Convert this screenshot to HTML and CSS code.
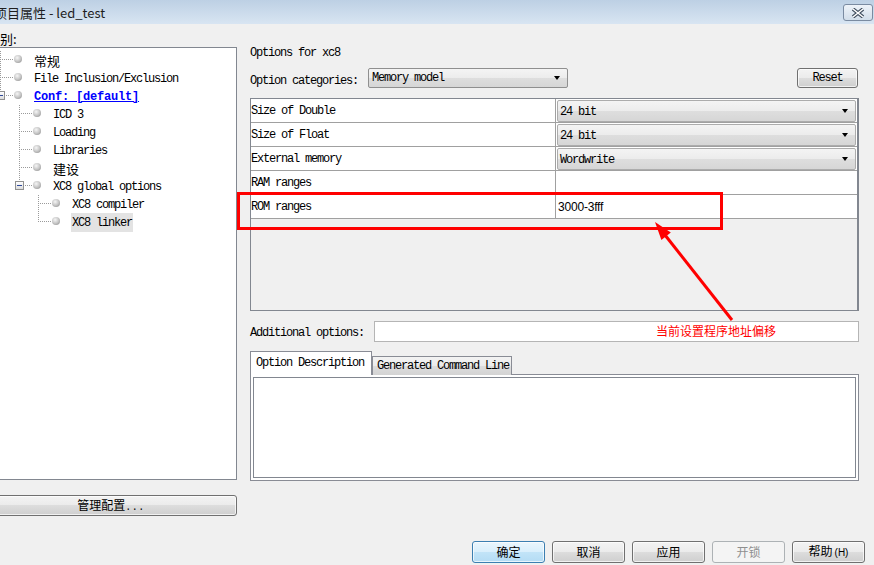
FILE: index.html
```html
<!DOCTYPE html>
<html lang="zh-CN">
<head>
    <meta charset="UTF-8">
    <title>项目属性 - led_test</title>
    <link rel="stylesheet" href="styles.css">
</head>
<body>
<div class="window">

    <div class="titlebar">
        <span class="title">项目属性 - led_test</span>
        <button class="close">
            <svg width="14" height="10" viewBox="0 0 14 10">
                <path d="M2 1 L12 9 M12 1 L2 9" stroke="#3f4d5e" stroke-width="3.6"/>
                <path d="M2 1 L12 9 M12 1 L2 9" stroke="#ffffff" stroke-width="1.6"/>
            </svg>
        </button>
    </div>

    <div class="content">
        <!-- category tree -->
        <div class="side">
            <div class="side-label">类别:</div>
            <div class="tree">
                <div class="node"><span class="tee"></span><span class="ball"></span><span class="name cjk">常规</span></div>
                <div class="node"><span class="tee"></span><span class="ball"></span><span class="name">File Inclusion/Exclusion</span></div>
                <div class="node"><span class="elbow"><span class="toggle"></span></span><span class="ball"></span><span class="name link">Conf: [default]</span></div>
                <div class="node"><span class="indent"></span><span class="tee"></span><span class="ball"></span><span class="name">ICD 3</span></div>
                <div class="node"><span class="indent"></span><span class="tee"></span><span class="ball"></span><span class="name">Loading</span></div>
                <div class="node"><span class="indent"></span><span class="tee"></span><span class="ball"></span><span class="name">Libraries</span></div>
                <div class="node"><span class="indent"></span><span class="tee"></span><span class="ball"></span><span class="name cjk">建设</span></div>
                <div class="node"><span class="indent"></span><span class="elbow"><span class="toggle"></span></span><span class="ball"></span><span class="name">XC8 global options</span></div>
                <div class="node"><span class="indent"></span><span class="indent"></span><span class="tee"></span><span class="ball"></span><span class="name">XC8 compiler</span></div>
                <div class="node"><span class="indent"></span><span class="indent"></span><span class="elbow"></span><span class="ball"></span><span class="name selected">XC8 linker</span></div>
            </div>
            <button class="btn wide">管理配置<span class="dots">...</span></button>
        </div>

        <!-- option pane -->
        <div class="pane">
            <div class="pane-title">Options for xc8</div>

            <div class="cat-row">
                <span class="cat-label">Option categories:</span>
                <div class="combo small">
                    <span>Memory model</span>
                    <span class="caret"></span>
                </div>
                <button class="btn reset">Reset</button>
            </div>

            <div class="grid">
                <div class="grid-row">
                    <div class="key">Size of Double</div>
                    <div class="val"><div class="combo"><span>24 bit</span><span class="caret"></span></div></div>
                </div>
                <div class="grid-row">
                    <div class="key">Size of Float</div>
                    <div class="val"><div class="combo"><span>24 bit</span><span class="caret"></span></div></div>
                </div>
                <div class="grid-row">
                    <div class="key">External memory</div>
                    <div class="val"><div class="combo"><span>Wordwrite</span><span class="caret"></span></div></div>
                </div>
                <div class="grid-row">
                    <div class="key">RAM ranges</div>
                    <div class="val"><div class="field"></div></div>
                </div>
                <div class="grid-row">
                    <div class="key">ROM ranges</div>
                    <div class="val"><div class="field">3000-3fff</div></div>
                </div>
            </div>

            <div class="extra-row">
                <span class="extra-label">Additional options:</span>
                <div class="extra-input"></div>
            </div>

            <div class="tabs">
                <div class="tab active">Option Description</div>
                <div class="tab">Generated Command Line</div>
            </div>
            <div class="tab-panel">
                <div class="tab-inner"></div>
            </div>
        </div>
    </div>

    <div class="footer">
        <button class="btn dlg default">确定</button>
        <button class="btn dlg">取消</button>
        <button class="btn dlg">应用</button>
        <button class="btn dlg" disabled>开锁</button>
        <button class="btn dlg">帮助<span class="key-hint">(H)</span></button>
    </div>

    <!-- red annotation drawn over the dialog -->
    <div class="mark-box"></div>
    <svg class="mark-arrow" width="100" height="115" viewBox="0 0 100 115">
        <line x1="25" y1="25" x2="92" y2="110" stroke="#ff0000" stroke-width="3"/>
        <polygon points="15,12 21.4,29.9 30.8,22.5" fill="#ff0000"/>
    </svg>
    <div class="mark-text">当前设置程序地址偏移</div>
</div>
</body>
</html>
```

FILE: styles.css
```css
* {
    margin: 0;
    padding: 0;
    box-sizing: border-box;
}

body {
    background: #f0f0f0;
    font-family: "Liberation Mono", monospace;
    font-size: 12px;
    letter-spacing: -1.2px;
    color: #000;
}

.window {
    position: relative;
    width: 874px;
    height: 565px;
    overflow: hidden;
}

/* Title bar */
.titlebar {
    height: 24px;
    display: flex;
    justify-content: space-between;
    align-items: flex-start;
    background: linear-gradient(to bottom, #bdd0e4, #d8e5f2);
}

.title {
    margin-left: -6px;
    padding-top: 4px;
    line-height: 17px;
    font-family: "Noto Sans CJK SC", sans-serif;
    font-size: 13px;
    letter-spacing: 0;
    color: #1e1e1e;
    white-space: nowrap;
}

.close {
    width: 30px;
    height: 17px;
    margin: 4px 1px 0 0;
    border: 1px solid #7a8ba1;
    border-radius: 3px;
    background: linear-gradient(to bottom, #eef3f9, #d2deea);
    display: flex;
    align-items: center;
    justify-content: center;
}

.content {
    display: flex;
    height: 517px;
}

/* Left side: tree */
.side {
    flex-shrink: 0;
    width: 252px;
    margin-left: -15px;
    display: flex;
    flex-direction: column;
}

.side-label {
    height: 23px;
    padding: 7px 0 0 2px;
    line-height: 16px;
    font-family: "Noto Sans CJK SC", sans-serif;
    font-size: 13px;
    letter-spacing: 0;
    white-space: nowrap;
}

.tree {
    height: 433px;
    background: #fff;
    border: 1px solid #828790;
    padding: 3px 0 0 13px;
}

.node {
    display: flex;
    align-items: center;
    height: 18px;
}

.indent {
    width: 19px;
    height: 18px;
    flex-shrink: 0;
}

.tee,
.elbow {
    width: 15px;
    height: 18px;
    flex-shrink: 0;
    display: flex;
    align-items: center;
    background:
        repeating-linear-gradient(to bottom, #9a9a9a 0 1px, transparent 1px 2px) 1px 0 / 1px 18px no-repeat,
        repeating-linear-gradient(to right, #9a9a9a 0 1px, transparent 1px 2px) 3px 8px / 11px 1px no-repeat;
}

.elbow {
    background:
        repeating-linear-gradient(to bottom, #9a9a9a 0 1px, transparent 1px 2px) 1px 0 / 1px 9px no-repeat,
        repeating-linear-gradient(to right, #9a9a9a 0 1px, transparent 1px 2px) 3px 8px / 11px 1px no-repeat;
}

.toggle {
    width: 9px;
    height: 9px;
    margin: -1px 0 0 -3px;
    border: 1px solid #919191;
    background:
        linear-gradient(#2f4a9a, #2f4a9a) center / 5px 1px no-repeat,
        linear-gradient(to bottom, #ffffff, #dcdcdc);
}

.ball {
    width: 8px;
    height: 8px;
    margin-top: -3px;
    flex-shrink: 0;
    border-radius: 50%;
    background: radial-gradient(circle at 40% 35%, #f6f6f6 0, #c6c6c6 50%, #858585 100%);
}

.name {
    margin: 2px 0 0 11px;
    padding: 0 1px;
    line-height: 17px;
    white-space: nowrap;
}

.name.cjk {
    margin-top: 0;
    font-family: "Noto Sans CJK SC", sans-serif;
    font-size: 13px;
    letter-spacing: 0;
}

.name.link {
    color: #0000ff;
    font-weight: bold;
    text-decoration: underline;
    letter-spacing: -0.2px;
}

.name.selected {
    margin-top: 0;
    padding-top: 2px;
    background: #e3e3e3;
}

/* Buttons */
.btn {
    font-family: "Noto Sans CJK SC", sans-serif;
    font-size: 12px;
    letter-spacing: 0;
    color: #000;
    border: 1px solid #707070;
    border-radius: 3px;
    background: linear-gradient(to bottom, #f3f3f3 0, #ebebeb 50%, #dddddd 50%, #cfcfcf 100%);
    box-shadow: inset 0 0 0 1px rgba(255, 255, 255, 0.7);
}

.btn.wide {
    margin-top: 15px;
    height: 21px;
    line-height: 17px;
}

.dots {
    font-family: "Liberation Mono", monospace;
    font-size: 10px;
    letter-spacing: 0.5px;
}

/* Right pane */
.pane {
    flex-shrink: 0;
    width: 609px;
    margin-left: 13px;
    padding-top: 21px;
}

.pane-title {
    line-height: 16px;
}

.cat-row {
    display: flex;
    align-items: center;
    height: 21px;
    margin-top: 6px;
}

.cat-label {
    width: 118px;
    margin-top: 6px;
}

.combo {
    display: flex;
    align-items: center;
    justify-content: space-between;
    height: 100%;
    padding: 2px 7px 0 2px;
    border: 1px solid #acacac;
    border-radius: 2px;
    background: linear-gradient(to bottom, #f4f4f4 0, #ececec 50%, #dedede 50%, #d6d6d6 100%);
}

.combo.small {
    width: 200px;
    height: 20px;
    margin-top: 1px;
    padding: 0 7px 0 3px;
    border-color: #8f8f8f;
}

.caret {
    width: 0;
    height: 0;
    border-top: 4px solid #000;
    border-left: 3.5px solid transparent;
    border-right: 3.5px solid transparent;
}

.combo .caret {
    margin-top: -2px;
}

.combo.small .caret {
    margin-top: 0;
}

.btn.reset {
    width: 61px;
    height: 20px;
    margin: 0 1px 0 auto;
    font-family: "Liberation Mono", monospace;
    font-size: 12px;
    letter-spacing: -1.2px;
}

/* Property grid */
.grid {
    height: 213px;
    margin-top: 10px;
    border: 1px solid #828790;
    border-right-width: 2px;
    background: #f0f0f0;
}

.grid-row {
    display: grid;
    grid-template-columns: 305px 1fr;
    height: 24px;
    border-bottom: 1px solid #a0a0a0;
}

.key {
    background: #fff;
    border-right: 1px solid #a0a0a0;
    padding-top: 2px;
    line-height: 21px;
}

.val {
    padding: 1px 1px 0 1px;
    background: #fff;
}

.field {
    height: 100%;
    padding: 2px 0 0 1px;
    background: #fff;
    font-family: "Liberation Sans", sans-serif;
    font-size: 12px;
    letter-spacing: -0.2px;
    line-height: 19px;
}

/* Additional options */
.extra-row {
    display: flex;
    align-items: center;
    height: 21px;
    margin-top: 10px;
}

.extra-label {
    width: 124px;
    margin-top: 2px;
}

.extra-input {
    flex: 1;
    height: 21px;
    background: #fff;
    border: 1px solid #b5b5b5;
}

/* Tabs */
.tabs {
    display: flex;
    align-items: flex-end;
    height: 22px;
    margin-top: 11px;
    margin-bottom: -1px;
}

.tab {
    height: 19px;
    padding: 1px 0 0 4px;
    width: 140px;
    line-height: 17px;
    border: 1px solid #898c95;
    border-bottom: none;
    background: linear-gradient(to bottom, #f3f3f3 0, #ebebeb 50%, #dddddd 50%, #d3d3d3 100%);
}

.tab.active {
    position: relative;
    width: 122px;
    height: 24px;
    padding: 1px 0 0 5px;
    line-height: 21px;
    background: #fff;
}

.tab-panel {
    height: 107px;
    padding: 2px;
    border: 1px solid #898c95;
    background: #fff;
}

.tab-inner {
    height: 100%;
    border: 1px solid #828790;
}

/* Dialog buttons */
.footer {
    display: flex;
    justify-content: flex-end;
    gap: 7px;
    padding: 0 9px 0 0;
}

.btn.dlg {
    width: 73px;
    height: 22px;
    line-height: 18px;
}

.btn.default {
    border-color: #3c7fb1;
    background: linear-gradient(to bottom, #eaf6fd 0, #d9effc 50%, #c2e4f8 50%, #b4dcf4 100%);
}

.btn.dlg:disabled {
    color: #8f8f8f;
    border-color: #adb2b5;
    background: #f4f4f4;
    box-shadow: none;
}

.key-hint {
    margin-left: 2px;
    font-family: "Liberation Sans", sans-serif;
    font-size: 10px;
}

/* Red annotation */
.mark-box {
    position: absolute;
    left: 237px;
    top: 192px;
    width: 486px;
    height: 38px;
    border: 3px solid #ff0000;
}

.mark-arrow {
    position: absolute;
    left: 640px;
    top: 210px;
}

.mark-text {
    position: absolute;
    left: 656px;
    top: 323px;
    line-height: 16px;
    font-family: "Noto Sans CJK SC", sans-serif;
    font-size: 12px;
    letter-spacing: 0;
    color: #ff0000;
}
```
